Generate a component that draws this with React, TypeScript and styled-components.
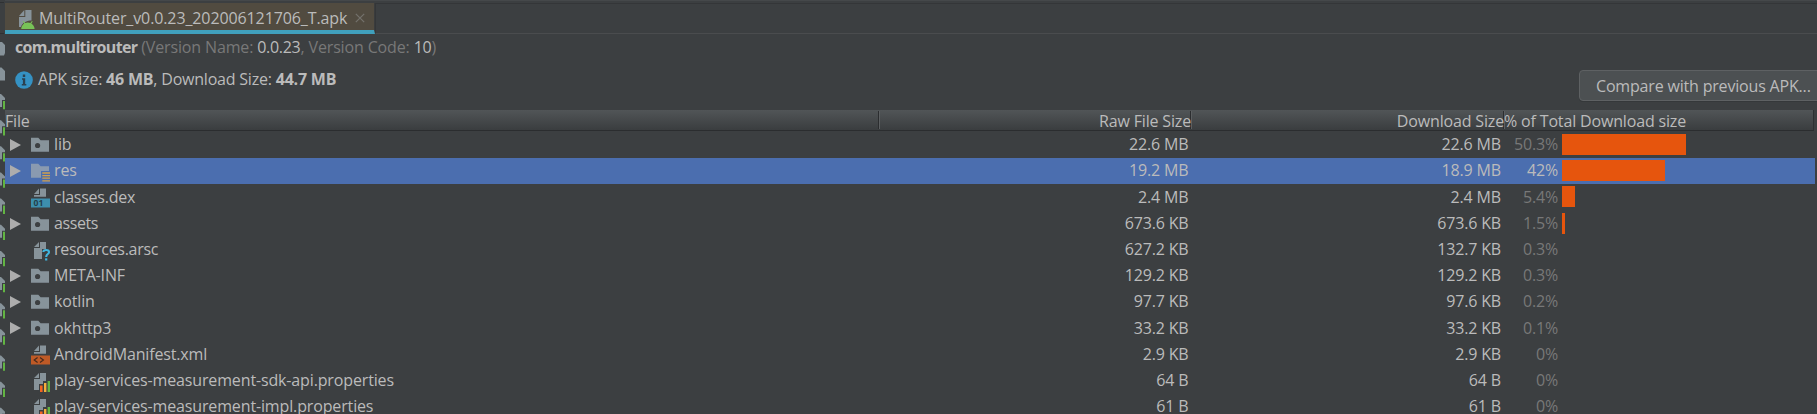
import React from "react";
import styled, { createGlobalStyle } from "styled-components";

const Global = createGlobalStyle`
  * { box-sizing: border-box; }
  html, body { margin: 0; overflow: hidden; background: #3c3f41; }
`;

const Screen = styled.div`
  display: flex;
  width: 1817px;
  height: 414px;
  overflow: hidden;
  background: #3c3f41;
  color: #bbbbbb;
  font: 16px/22px "Open Sans", "Noto Sans", sans-serif;
  letter-spacing: -0.16px;
  white-space: pre;
`;
const Gutter = styled.svg`
  flex: none;
  width: 5px;
  height: 414px;
`;
const Main = styled.main`
  display: flex;
  flex: none;
  flex-direction: column;
  width: 1812px;
`;
const TabBar = styled.div`
  display: flex;
  flex: none;
  height: 34px;
  padding-top: 3px;
  background: linear-gradient(#45484a 0 1px, #3c3f41 1px);
`;
const Tab = styled.div`
  display: flex;
  flex: none;
  width: 370px;
  height: 31px;
  padding: 4px 0 0 13px;
  background: #514b40;
  border-bottom: 4px solid #40a0bd;
  border-right: 1px solid #3a3c3d;
  letter-spacing: -0.11px;
`;
const TabIcon = styled.svg`
  flex: none;
  width: 18px;
  height: 20px;
  margin: 3px 3px 0 0;
`;
const Close = styled.svg`
  width: 10px;
  height: 10px;
  margin: 6px 0 0 8px;
`;
const TabRest = styled.div`
  flex: 1;
  border-top: 1px solid #343638;
  border-left: 1px solid #343638;
  border-bottom: 1px solid #4a4c4e;
`;
const Package = styled.div`
  flex: none;
  height: 32px;
  padding: 2px 0 0 10px;
  color: #787878;
  letter-spacing: -0.14px;
`;
const PackageName = styled.b`
  color: #bbbbbb;
  letter-spacing: -0.7px;
`;
const Value = styled.span`
  color: #bbbbbb;
  letter-spacing: -0.3px;
`;
const SizeLine = styled.div`
  display: flex;
  flex: none;
  height: 44px;
  padding-left: 10px;
`;
const SizeText = styled.div`
  padding-top: 2px;
  letter-spacing: -0.21px;
`;
const InfoIcon = styled.svg`
  flex: none;
  width: 18px;
  height: 18px;
  margin: 5px 5px 0 0;
`;
const Compare = styled.button`
  width: 260px;
  height: 31px;
  margin: 4px -22px 0 auto;
  padding: 1px 0 0 16px;
  border: 1px solid #5e6163;
  border-radius: 4px;
  background: #4c5052;
  box-shadow: 0 1px 0 #35383a;
  color: #bbbbbb;
  font: inherit;
  letter-spacing: -0.18px;
  text-align: left;
`;
const Header = styled.div`
  display: grid;
  grid-template-columns: 874px 312px 313px 1fr;
  flex: none;
  width: 1809px;
  height: 21px;
  background: linear-gradient(#515557, #3a3d3f);
  border-right: 1px solid #2e3032;
  border-bottom: 1px solid #2b2d2f;
`;
const Head = styled.div<{ $right?: boolean; $last?: boolean }>`
  height: 18px;
  margin-top: 1px;
  line-height: 20px;
  text-align: ${(p) => (p.$right ? "right" : "left")};
  box-shadow: ${(p) => (p.$last ? "none" : "inset -1px 0 0 #2b2d2f, 1px 0 0 #5c5f61")};
`;
const List = styled.div`
  padding-top: 0.9px;
`;
const Row = styled.div<{ $selected?: boolean }>`
  display: grid;
  grid-template-columns: 875px 308.5px 312.5px 57px 1fr;
  flex: none;
  width: 1810px;
  height: 26.2px;
  align-items: center;
  background: ${(p) => (p.$selected ? "#4b6eaf" : "transparent")};
`;
const NameCell = styled.div`
  display: flex;
  align-items: center;
  padding-left: 5px;
`;
const Name = styled.span<{ $spacing?: number }>`
  padding-bottom: 1.4px;
  letter-spacing: ${(p) => p.$spacing ?? -0.15}px;
`;
const Arrow = styled.svg`
  width: 11px;
  height: 12px;
  margin-right: 10px;
`;
const FileIcon = styled.svg`
  width: 20px;
  height: 20px;
  margin-right: 3px;
  overflow: visible;
`;
const Num = styled.div`
  padding-bottom: 1.4px;
  text-align: right;
`;
const Percent = styled.div<{ $selected?: boolean }>`
  padding-bottom: 1.4px;
  text-align: right;
  color: ${(p) => (p.$selected ? "#bbbbbb" : "#787878")};
`;
const Bar = styled.div`
  height: 21px;
  margin: 0 0 1px 4px;
  background: #e6550d;
`;

type Kind = "folder" | "res" | "dex" | "unknown" | "xml" | "props";

const grey = "#87939a";
const Page = ({ h }: { h: number }) => (
  <>
    <path d={`M9 1.5H15V${h}H3V8H9Z`} fill={grey} />
    <path d="M8 1.5V7H3Z" fill={grey} />
  </>
);

function Icon({ kind }: { kind: Kind }) {
  return (
    <FileIcon viewBox="0 0 20 20">
      {kind === "folder" && (
        <path
          fill={grey}
          fillRule="evenodd"
          d="M0 2.7H7.3L9.6 5.3H18V16.7H0ZM6.6 7.9A2.6 2.6 0 1 0 6.6 13.1A2.6 2.6 0 1 0 6.6 7.9Z"
        />
      )}
      {kind === "res" && (
        <>
          <path fill="#8a9ab0" d="M0 2.7H7.3L9.6 5.3H18V10H10V16.7H0Z" />
          <path stroke="#d0a050" strokeWidth="1.3" d="M11.3 12H19M11.3 14.6H19M11.3 17.2H19M11.3 19.8H19" />
        </>
      )}
      {kind === "dex" && (
        <>
          <Page h={9.8} />
          <path fill="#3d8fae" d="M0 11.5H19V20.5H0Z" />
          <text x="2.4" y="19" fontSize="8.6" fontWeight="700" letterSpacing="0.3" fontFamily="Open Sans, sans-serif" fill="#24404c">01</text>
        </>
      )}
      {kind === "xml" && (
        <>
          <Page h={9.8} />
          <path fill="#bf5a26" d="M0 11.5H19V20.5H0Z" />
          <path fill="none" stroke="#472a1c" strokeWidth="1.2" d="M6.6 13.4L3.2 16L6.6 18.6M9 13.4L12.4 16L9 18.6" />
        </>
      )}
      {kind === "unknown" && (
        <>
          <path d="M9 2H15V9H11V19H3V8H9Z M8 2V7H3Z" fill={grey} />
          <path fill="none" stroke="#40b6e0" strokeWidth="2.1" d="M12.3 12C12.5 9.3 18 9.2 18 12.2C18 14.2 15.2 14 15.2 17" />
          <path fill="#40b6e0" d="M14.1 18.3H16.3V20.5H14.1Z" />
        </>
      )}
      {kind === "props" && (
        <>
          <path d="M9 2H15V10H12V13H8V19H3V8H9Z M8 2V7H3Z" fill={grey} />
          <path fill="#f26522" d="M9 14.5H11.6V21H9Z" />
          <path fill="#f4af3d" d="M13 12H15.4V21H13Z" />
          <path fill="#62b543" d="M16.6 10H19V21H16.6Z" />
        </>
      )}
    </FileIcon>
  );
}

interface Entry {
  name: string;
  kind: Kind;
  raw: string;
  download: string;
  percent: string;
  bar?: number;
  selected?: boolean;
  spacing?: number;
}

const entries: Entry[] = [
  { name: "lib", kind: "folder", raw: "22.6 MB", download: "22.6 MB", percent: "50.3%", bar: 124 },
  { name: "res", kind: "res", raw: "19.2 MB", download: "18.9 MB", percent: "42%", bar: 103, selected: true },
  { name: "classes.dex", kind: "dex", raw: "2.4 MB", download: "2.4 MB", percent: "5.4%", bar: 13, spacing: -0.25 },
  { name: "assets", kind: "folder", raw: "673.6 KB", download: "673.6 KB", percent: "1.5%", bar: 3, spacing: -0.4 },
  { name: "resources.arsc", kind: "unknown", raw: "627.2 KB", download: "132.7 KB", percent: "0.3%", spacing: -0.3 },
  { name: "META-INF", kind: "folder", raw: "129.2 KB", download: "129.2 KB", percent: "0.3%" },
  { name: "kotlin", kind: "folder", raw: "97.7 KB", download: "97.6 KB", percent: "0.2%" },
  { name: "okhttp3", kind: "folder", raw: "33.2 KB", download: "33.2 KB", percent: "0.1%" },
  { name: "AndroidManifest.xml", kind: "xml", raw: "2.9 KB", download: "2.9 KB", percent: "0%" },
  { name: "play-services-measurement-sdk-api.properties", kind: "props", raw: "64 B", download: "64 B", percent: "0%", spacing: -0.14 },
  { name: "play-services-measurement-impl.properties", kind: "props", raw: "61 B", download: "61 B", percent: "0%", spacing: -0.14 },
];

const modules = Array.from({ length: 13 }, (_, i) => 94 + i * 26.15);

export default function App() {
  return (
    <Screen>
      <Global />
      <Gutter viewBox="0 0 5 414">
        <path stroke="#2f3133" d="M0 2.5H4M0 33.5H4" />
        <path fill={grey} d="M0 42H2L5 45V53L4 55.5H0ZM0 67.5H1.5L5 71V80.5H0Z" />
        {modules.map((y) => (
          <g key={y} transform={`translate(0 ${y})`}>
            <path fill={grey} d="M0 0H1L5 4V6H2V13H0Z" />
            <path fill="#62b543" d="M3 7H5V15.3H3Z" />
          </g>
        ))}
      </Gutter>
      <Main>
        <TabBar>
          <Tab>
            <TabIcon viewBox="0 0 18 20">
              <path fill={grey} d="M7.3 0H13.5V10.5C10 10.5 4 12 3 17H1V7H7.3Z" />
              <path fill={grey} d="M6.3 0V6H1Z" />
              <path fill="#78c257" d="M3.2 19C3.4 15.8 5 14.2 6.3 13.4L4.9 11.4L5.7 10.9L7.2 12.9Q9.8 12 12.4 12.9L13.9 10.9L14.7 11.4L13.3 13.4C15 14.4 16.5 16.2 16.6 19Z" />
            </TabIcon>
            MultiRouter_v0.0.23_202006121706_T.apk
            <Close viewBox="0 0 10 10">
              <path stroke="#74726c" strokeWidth="1.2" d="M0.8 0.8L9.2 9.2M9.2 0.8L0.8 9.2" />
            </Close>
          </Tab>
          <TabRest />
        </TabBar>
        <Package>
          <PackageName>com.multirouter</PackageName> (Version Name: <Value>0.0.23</Value>, Version Code: <Value>10</Value>)
        </Package>
        <SizeLine>
          <InfoIcon viewBox="0 0 18 18">
            <circle cx="9" cy="9" r="8.8" fill="#3592c4" />
            <path fill="#2b4150" d="M7.8 3.6H10.2V6H7.8ZM7 7.3H10.2V13H11.3V14.4H6.8V13H7.9V8.7H7Z" />
          </InfoIcon>
          <SizeText>APK size: <b>46 MB</b>, Download Size: <b>44.7 MB</b></SizeText>
          <Compare>Compare with previous APK...</Compare>
        </SizeLine>
        <Header>
          <Head>File</Head>
          <Head $right>Raw File Size</Head>
          <Head $right>Download Size</Head>
          <Head $last>% of Total Download size</Head>
        </Header>
        <List>
          {entries.map((e) => (
            <Row key={e.name} $selected={e.selected}>
              <NameCell>
                <Arrow viewBox="0 0 11 12">
                  {(e.kind === "folder" || e.kind === "res") && <path fill="#adadad" d="M0 0L11 6L0 12Z" />}
                </Arrow>
                <Icon kind={e.kind} />
                <Name $spacing={e.spacing}>{e.name}</Name>
              </NameCell>
              <Num>{e.raw}</Num>
              <Num>{e.download}</Num>
              <Percent $selected={e.selected}>{e.percent}</Percent>
              {e.bar ? <Bar style={{ width: e.bar }} /> : <span />}
            </Row>
          ))}
        </List>
      </Main>
    </Screen>
  );
}
